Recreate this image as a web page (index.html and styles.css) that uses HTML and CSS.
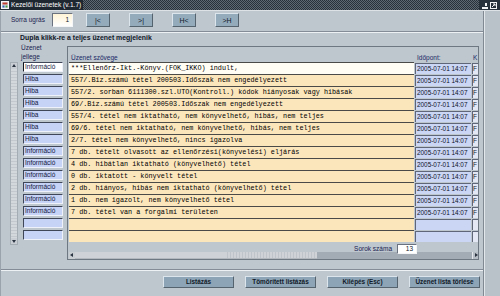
FILE: index.html
```html
<!DOCTYPE html>
<html lang="hu">
<head>
<meta charset="utf-8">
<title>Kezelői üzenetek</title>
<link rel="stylesheet" href="styles.css">
</head>
<body>
<div class="win">
  <div class="titlebar">
    <span class="ticon"><svg width="8" height="8" viewBox="0 0 8 8"><rect x="0.5" y="0.5" width="7" height="7" fill="#d8dde4" stroke="#f4f6f8"/><rect x="1.5" y="1.5" width="5" height="2" fill="#c04030"/><rect x="1.5" y="4.5" width="2" height="2" fill="#3060b0"/><rect x="4.5" y="4.5" width="2" height="2" fill="#40a040"/></svg></span>
    <span class="ttext">Kezelői üzenetek (v.1.7)</span>
    <span class="tfill"></span>
    <span class="tbtns">
      <svg width="6" height="7" viewBox="0 0 6 7"><rect x="0" y="5" width="6" height="2" fill="#f0f2f4"/><rect x="3" y="1" width="2" height="3" fill="#f0f2f4"/></svg>
      <svg width="7" height="7" viewBox="0 0 7 7"><rect x="0.5" y="0.5" width="6" height="6" fill="none" stroke="#f0f2f4"/><path d="M2 5 L5 2 M3 2 H5 V4" stroke="#f0f2f4" fill="none"/></svg>
    </span>
  </div>
  <div class="body">
    <div class="main">
      <div class="toolbar">
        <span class="lbl jumplbl">Sorra ugrás</span>
        <div class="inp jump">1</div>
        <button class="btn nav">|&lt;</button>
        <button class="btn nav">&gt;|</button>
        <button class="btn nav">H&lt;</button>
        <button class="btn nav">&gt;H</button>
      </div>
      <div class="sep"></div>
      <div class="heading">Dupla klikk-re a teljes üzenet megjelenik</div>
      <div class="content">
        <div class="vscroll">
          <span class="varrow up"></span>
          <span class="vtrack"></span>
          <span class="varrow down"></span>
        </div>
        <div class="typecol">
          <div class="typehead">Üzenet<br>jellege</div>
          <div class="tcell sel">Információ</div>
          <div class="tcell">Hiba</div>
          <div class="tcell">Hiba</div>
          <div class="tcell">Hiba</div>
          <div class="tcell">Hiba</div>
          <div class="tcell">Hiba</div>
          <div class="tcell">Hiba</div>
          <div class="tcell">Információ</div>
          <div class="tcell">Információ</div>
          <div class="tcell">Információ</div>
          <div class="tcell">Információ</div>
          <div class="tcell">Információ</div>
          <div class="tcell">Információ</div>
          <div class="tcell"></div>
          <div class="tcell"></div>
        </div>
        <div class="grid">
          <div class="ghead">
            <span class="h-msg">Üzenet szövege</span>
            <span class="h-time">Időpont:</span>
            <span class="h-k">K</span>
          </div>
          <div class="row first"><div class="msg">***Ellenőrz-Ikt.-Könyv.(FOK_IKKO) indult,</div><div class="time">2005-07-01 14:07</div><div class="k">F</div></div>
          <div class="row"><div class="msg">557/.Biz.számú tétel 200503.Időszak nem engedélyezett</div><div class="time">2005-07-01 14:07</div><div class="k">F</div></div>
          <div class="row"><div class="msg">557/2. sorban 6111300.szl.UTO(Kontroll.) kódok hiányosak vagy hibásak</div><div class="time">2005-07-01 14:07</div><div class="k">F</div></div>
          <div class="row"><div class="msg">69/.Biz.számú tétel 200503.Időszak nem engedélyezett</div><div class="time">2005-07-01 14:07</div><div class="k">F</div></div>
          <div class="row"><div class="msg">557/4. tétel nem iktatható, nem könyvelhető, hibás, nem teljes</div><div class="time">2005-07-01 14:07</div><div class="k">F</div></div>
          <div class="row"><div class="msg">69/6. tétel nem iktatható, nem könyvelhető, hibás, nem teljes</div><div class="time">2005-07-01 14:07</div><div class="k">F</div></div>
          <div class="row"><div class="msg">2/7. tétel nem könyvelhető, nincs igazolva</div><div class="time">2005-07-01 14:07</div><div class="k">F</div></div>
          <div class="row"><div class="msg">7 db. tételt olvasott az ellenőrzési(könyvelési) eljárás</div><div class="time">2005-07-01 14:07</div><div class="k">F</div></div>
          <div class="row"><div class="msg">4 db. hibátlan iktatható (könyvelhető) tétel</div><div class="time">2005-07-01 14:07</div><div class="k">F</div></div>
          <div class="row"><div class="msg">0 db. iktatott - könyvelt tétel</div><div class="time">2005-07-01 14:07</div><div class="k">F</div></div>
          <div class="row"><div class="msg">2 db. hiányos, hibás nem iktatható (könyvelhető) tétel</div><div class="time">2005-07-01 14:07</div><div class="k">F</div></div>
          <div class="row"><div class="msg">1 db. nem igazolt, nem könyvelhető tétel</div><div class="time">2005-07-01 14:07</div><div class="k">F</div></div>
          <div class="row"><div class="msg">7 db. tétel van a forgalmi területen</div><div class="time">2005-07-01 14:07</div><div class="k">F</div></div>
          <div class="row"><div class="msg"></div><div class="time"></div><div class="k"></div></div>
          <div class="row"><div class="msg"></div><div class="time"></div><div class="k"></div></div>
          <div class="gfoot">
            <span class="lbl">Sorok száma</span>
            <div class="inp cnt">13</div>
          </div>
          <div class="hscroll">
            <span class="harrow left"></span>
            <span class="hthumb"></span>
            <span class="htrack"></span>
            <span class="harrow right"></span>
          </div>
        </div>
      </div>
      <div class="sep bottomsep"></div>
      <div class="actions">
        <button class="btn act">Listázás</button>
        <button class="btn act">Tömörített listázás</button>
        <button class="btn act">Kilépés (Esc)</button>
        <button class="btn act">Üzenet lista törlése</button>
      </div>
    </div>
    <div class="rstrip"></div>
  </div>
</div>
</body>
</html>
```

FILE: styles.css
```css
* { box-sizing: border-box; }
html, body { margin: 0; padding: 0; }
body {
  width: 500px;
  height: 296px;
  overflow: hidden;
  font-family: "Liberation Sans", Arial, sans-serif;
  font-size: 6.5px;
  color: #1a2450;
  background: #bec6ce;
}
.win {
  width: 500px;
  height: 296px;
  background: #bec6ce;
  display: flex;
  flex-direction: column;
}

/* title bar */
.titlebar {
  height: 11px;
  display: flex;
  align-items: center;
  background-color: #27313b;
  background-image: repeating-conic-gradient(#5d6873 0 25%, #27313b 0 50%);
  background-size: 2px 2px;
  border-bottom: 1px solid #dde2e7;
}
.ticon {
  width: 10px;
  height: 10px;
  display: flex;
  align-items: center;
  justify-content: center;
  background: #27313b;
}
.ttext {
  background: #1e262f;
  color: #ffffff;
  font-size: 6.6px;
  line-height: 10px;
  padding: 0 2px 0 1px;
}
.tfill { flex: 1; }
.tbtns {
  display: flex;
  gap: 2px;
  align-items: center;
  padding: 0 3px 0 3px;
  height: 10px;
  background: #27313b;
}

/* body */
.body {
  flex: 1;
  display: flex;
}
.main {
  width: 483px;
  display: flex;
  flex-direction: column;
  border-left: 1px solid #9aa3ac;
}
.rstrip {
  flex: 1;
  border-left: 1px solid #808992;
  box-shadow: inset 1px 0 0 #e2e7eb;
  background: #b9c1c9;
}

/* toolbar */
.toolbar {
  height: 20px;
  display: flex;
  align-items: flex-start;
  padding: 2px 0 0 10px;
}
.lbl { color: #1a2450; }
.jumplbl {
  width: 41px;
  line-height: 14px;
}
.inp {
  background: #fffdf0;
  border-top: 1px solid #6a7280;
  border-left: 1px solid #6a7280;
  border-bottom: 1px solid #f4f6f8;
  border-right: 1px solid #f4f6f8;
  color: #10182a;
  text-align: right;
}
.jump {
  width: 21px;
  height: 14px;
  line-height: 12px;
  padding-right: 3px;
  background: linear-gradient(#fff4d6, #ffffff);
}
.btn {
  font-family: "Liberation Sans", Arial, sans-serif;
  color: #121a28;
  background: #94abbc;
  border-top: 1px solid #dce5ec;
  border-left: 1px solid #dce5ec;
  border-bottom: 1px solid #55636f;
  border-right: 1px solid #55636f;
  padding: 0;
  margin: 0;
}
.nav {
  width: 24px;
  height: 14px;
  font-size: 7px;
  margin-left: 19px;
}
.nav:first-of-type { margin-left: 13px; }

.sep {
  height: 2px;
  border-top: 1px solid #848d97;
  border-bottom: 1px solid #eef1f4;
}
.heading {
  height: 10px;
  line-height: 10px;
  font-weight: bold;
  font-size: 6.9px;
  color: #101828;
  padding-left: 19px;
}

/* content */
.content {
  display: flex;
  align-items: flex-start;
  padding-left: 9px;
  height: 217px;
}
.vscroll {
  width: 8px;
  height: 183px;
  margin-top: 19px;
  display: flex;
  flex-direction: column;
  background: #d3d8dd;
  border: 1px solid #a4acb4;
}
.vtrack {
  flex: 1;
  background-image: repeating-linear-gradient(#d3d8dd 0 2px, #c2c8ce 2px 3px);
}
.varrow {
  height: 6px;
  position: relative;
  background: #c8ced4;
}
.varrow::after {
  content: "";
  position: absolute;
  left: 1px;
  width: 0;
  height: 0;
  border-left: 2.5px solid transparent;
  border-right: 2.5px solid transparent;
}
.varrow.up::after { top: 1px; border-bottom: 3px solid #2a3340; }
.varrow.down::after { top: 2px; border-top: 3px solid #2a3340; }

.typecol {
  width: 41px;
  margin-left: 4px;
  display: flex;
  flex-direction: column;
}
.typehead {
  height: 19px;
  line-height: 8.5px;
  padding-top: 1px;
  margin-left: -1px;
  color: #1a2450;
}
.tcell {
  height: 10px;
  margin-bottom: 2px;
  margin-left: 1px;
  background: #c6d2f6;
  border-top: 1px solid #3e4658;
  border-left: 1px solid #3e4658;
  border-bottom: 1px solid #eef1fa;
  border-right: 1px solid #eef1fa;
  line-height: 8px;
  padding-left: 1px;
  color: #101840;
  white-space: nowrap;
  overflow: hidden;
}
.tcell.sel {
  background: #ffffff;
  border-left: 1px solid #10141c;
}

/* grid */
.grid {
  width: 412px;
  margin-left: 4px;
  margin-top: 3px;
  border: 1px solid #6e7882;
  display: flex;
  flex-direction: column;
  padding-left: 1px;
}
.ghead {
  height: 15px;
  display: flex;
  align-items: flex-end;
  line-height: 8px;
  color: #1a2a66;
}
.h-msg { width: 346px; padding-left: 2px; }
.h-time { width: 57px; padding-left: 2px; }
.h-k { padding-left: 1px; }
.row {
  height: 12px;
  display: flex;
}
.msg {
  width: 345px;
  height: 12px;
  background: #fbe6bc;
  border-top: 1px solid #4a4a48;
  font-family: "Liberation Mono", "Courier New", monospace;
  font-size: 6.8px;
  line-height: 11px;
  color: #000000;
  padding-left: 2px;
  white-space: nowrap;
  overflow: hidden;
}
.row.first .msg { background: #fffdf4; }
.time {
  width: 56px;
  height: 11px;
  margin-left: 1px;
  margin-top: 1px;
  background: #cbd5f4;
  border-top: 1px solid #5e6678;
  border-left: 1px solid #5e6678;
  font-size: 6.4px;
  line-height: 10px;
  color: #0c1428;
  padding-left: 1px;
  white-space: nowrap;
  overflow: hidden;
}
.k {
  width: 6px;
  height: 11px;
  margin-left: 1px;
  margin-top: 1px;
  background: #e4e8f4;
  border-top: 1px solid #5e6678;
  border-left: 1px solid #5e6678;
  font-size: 6.5px;
  line-height: 10px;
  color: #141c30;
  overflow: hidden;
}
.gfoot {
  height: 10px;
  display: flex;
  justify-content: flex-end;
  align-items: flex-start;
  padding-right: 61px;
  padding-top: 3px;
  line-height: 8px;
}
.cnt {
  width: 20px;
  height: 10px;
  margin-left: 5px;
  margin-top: -1px;
  background: #ffffff;
  line-height: 8px;
  padding-right: 3px;
  position: relative;
  z-index: 1;
}
.hscroll {
  height: 7px;
  display: flex;
  background: #a9b1b9;
}
.harrow {
  width: 6px;
  position: relative;
  background: #c9ced3;
}
.harrow::after {
  content: "";
  position: absolute;
  top: 1px;
  width: 0;
  height: 0;
  border-top: 2.5px solid transparent;
  border-bottom: 2.5px solid transparent;
}
.harrow.left::after { left: 1px; border-right: 3px solid #2a3340; }
.harrow.right::after { left: 2px; border-left: 3px solid #2a3340; }
.harrow.right { background: #b6bdc4; border-left: 1px solid #e4e8ec; }
.hthumb {
  width: 242px;
  background: #cfd3d7;
  background-image: linear-gradient(90deg, #cfd3d7 0 150px, transparent 150px),
    repeating-linear-gradient(90deg, #cfd3d7 0 2px, #bfc4ca 2px 3px);
  border-bottom: 1px solid #b2b8be;
}
.htrack { flex: 1; background: #a3abb4; }

.bottomsep { margin-top: 9px; }
.actions {
  display: flex;
  gap: 11px;
  padding: 5px 0 0 162px;
}
.act {
  width: 71px;
  height: 12px;
  font-size: 6.4px;
  font-weight: bold;
  line-height: 10px;
  background: #8ca4b6;
}
```
